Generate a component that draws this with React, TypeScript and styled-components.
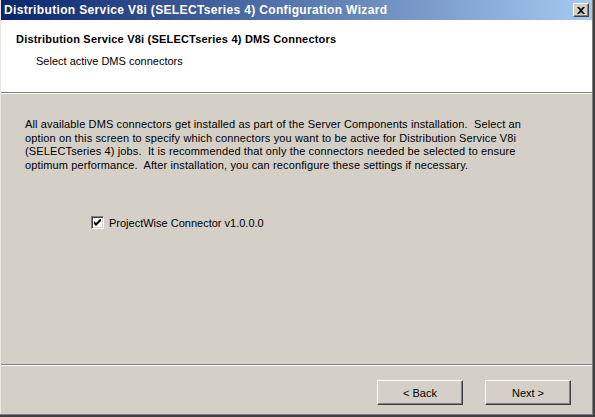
import React from "react";
import styled, { createGlobalStyle } from "styled-components";

const Global = createGlobalStyle`
  html, body { margin: 0; padding: 0; background: #D4D0C8; }
  body { font-family: "Liberation Sans", Arial, sans-serif; }
  * { box-sizing: border-box; }
`;

const Window = styled.div`
  width: 595px;
  height: 417px;
  display: flex;
  flex-direction: column;
  background: #D4D0C8;
  padding: 0 3px 4px 1px;
  box-shadow: inset -2px -2px 0 #404040, inset -3px -3px 0 #808080, inset 1px 0 0 #E8E6E0;
`;

const TitleBar = styled.div`
  height: 20px;
  flex: none;
  display: flex;
  align-items: center;
  justify-content: space-between;
  padding: 0 3px 0 3px;
  background: linear-gradient(to right, #0A246A, #A6CAF0);
`;

const TitleText = styled.span`
  color: #fff;
  font-weight: bold;
  font-size: 12px;
  letter-spacing: 0.35px;
  white-space: nowrap;
`;

const CloseButton = styled.div`
  width: 16px;
  height: 14px;
  background: #D4D0C8;
  border-top: 1px solid #fff;
  border-left: 1px solid #fff;
  border-right: 1px solid #404040;
  border-bottom: 1px solid #404040;
  box-shadow: inset -1px -1px 0 #808080;
  display: flex;
  align-items: center;
  justify-content: center;
`;

const Header = styled.div`
  height: 72px;
  flex: none;
  background: #fff;
  padding: 13px 0 0 15px;
`;

const HeaderTitle = styled.div`
  font-weight: bold;
  font-size: 11px;
  letter-spacing: 0.2px;
  color: #000;
  line-height: 13px;
`;

const HeaderSub = styled.div`
  font-size: 11px;
  color: #000;
  line-height: 13px;
  margin: 9px 0 0 20px;
`;

const Rule = styled.div`
  height: 2px;
  flex: none;
  border-top: 1px solid #808080;
  border-bottom: 1px solid #fff;
`;

const Body = styled.div`
  flex: 1;
  padding: 24px 0 0 24px;
`;

const Paragraph = styled.p`
  margin: 0;
  font-size: 11px;
  letter-spacing: 0.13px;
  line-height: 13.6px;
  color: #000;
  white-space: nowrap;
`;

const CheckRow = styled.label`
  display: flex;
  align-items: center;
  gap: 5px;
  margin: 44px 0 0 66px;
  font-size: 11px;
  color: #000;
`;

const CheckBox = styled.span`
  width: 13px;
  height: 13px;
  background: #fff;
  border-top: 1px solid #808080;
  border-left: 1px solid #808080;
  border-right: 1px solid #fff;
  border-bottom: 1px solid #fff;
  box-shadow: inset 1px 1px 0 #404040, inset -1px -1px 0 #D4D0C8;
  display: flex;
  align-items: center;
  justify-content: center;
`;

const Footer = styled.div`
  height: 47px;
  flex: none;
  display: flex;
  justify-content: flex-end;
  align-items: flex-start;
  gap: 22px;
  padding: 14px 21px 0 0;
`;

const Button = styled.button`
  width: 86px;
  height: 25px;
  background: #D4D0C8;
  font-family: "Liberation Sans", Arial, sans-serif;
  font-size: 11px;
  color: #000;
  border-top: 1px solid #fff;
  border-left: 1px solid #fff;
  border-right: 1px solid #404040;
  border-bottom: 1px solid #404040;
  box-shadow: inset -1px -1px 0 #808080;
  padding: 0;
`;

export default function App() {
  return (
    <>
      <Global />
      <Window>
        <TitleBar>
          <TitleText>Distribution Service V8i (SELECTseries 4) Configuration Wizard</TitleText>
          <CloseButton>
            <svg width="8" height="7" viewBox="0 0 8 7">
              <path d="M0 0h2l2 2 2-2h2L5 3.5 8 7H6L4 5 2 7H0l3-3.5z" fill="#000" />
            </svg>
          </CloseButton>
        </TitleBar>
        <Header>
          <HeaderTitle>Distribution Service V8i (SELECTseries 4) DMS Connectors</HeaderTitle>
          <HeaderSub>Select active DMS connectors</HeaderSub>
        </Header>
        <Rule />
        <Body>
          <Paragraph>
            All available DMS connectors get installed as part of the Server Components installation.&nbsp; Select an
            <br />
            option on this screen to specify which connectors you want to be active for Distribution Service V8i
            <br />
            (SELECTseries 4) jobs.&nbsp; It is recommended that only the connectors needed be selected to ensure
            <br />
            optimum performance.&nbsp; After installation, you can reconfigure these settings if necessary.
          </Paragraph>
          <CheckRow>
            <CheckBox>
              <svg width="7" height="7" viewBox="0 0 7 7">
                <path d="M0 2v3l2 2 5-5V-1L2 4z" fill="#000" />
              </svg>
            </CheckBox>
            ProjectWise Connector v1.0.0.0
          </CheckRow>
        </Body>
        <Rule />
        <Footer>
          <Button>&lt; Back</Button>
          <Button>Next &gt;</Button>
        </Footer>
      </Window>
    </>
  );
}
